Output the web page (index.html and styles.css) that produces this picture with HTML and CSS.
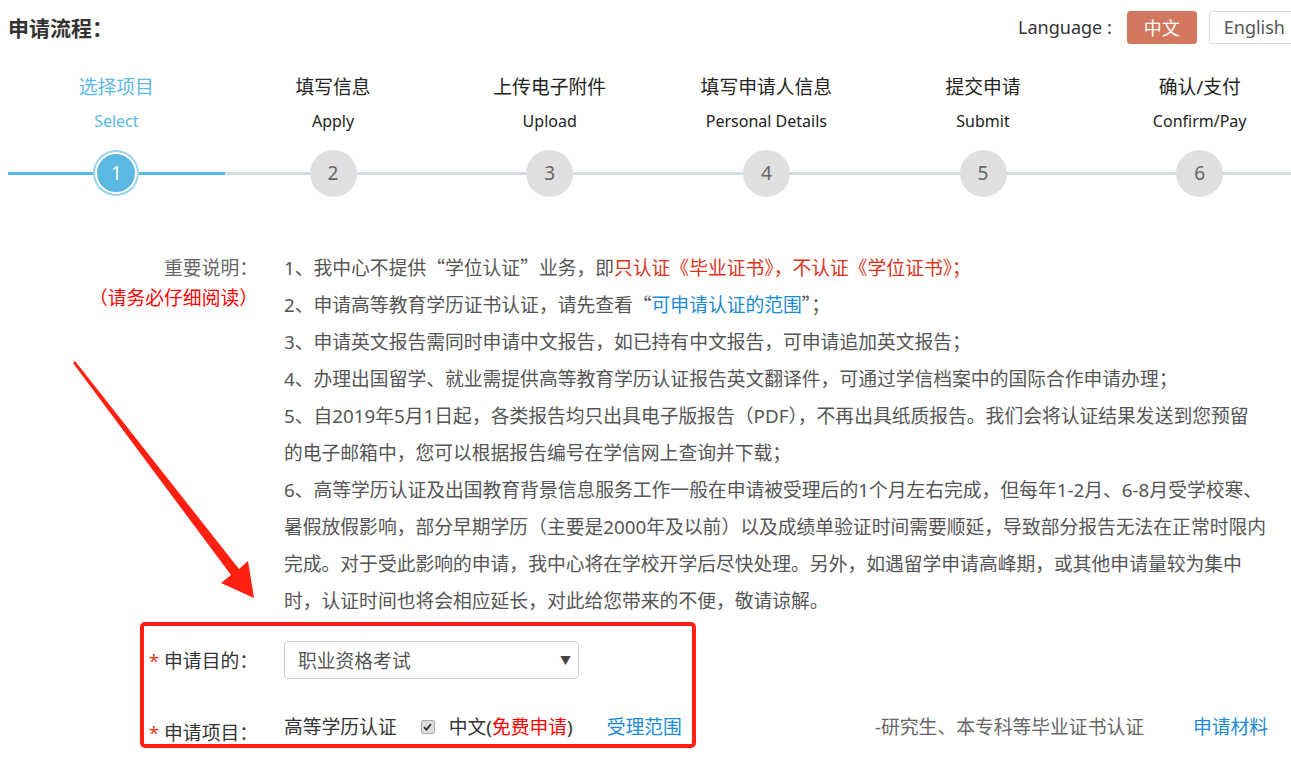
FILE: index.html
```html
<!DOCTYPE html>
<html lang="zh-CN">
<head>
    <meta charset="UTF-8">
    <meta name="viewport" content="width=device-width, initial-scale=1.0">
    <title>申请流程</title>
    <link rel="stylesheet" href="styles.css">
</head>
<body>
<div class="page">

    <!-- Header -->
    <div class="header">
        <h2 class="title">申请流程：</h2>
        <div class="lang">
            <span class="lang-label">Language :</span>
            <button class="lang-btn active">中文</button>
            <button class="lang-btn">English</button>
        </div>
    </div>

    <!-- Steps -->
    <div class="steps">
        <div class="step done">
            <div class="step-cn">选择项目</div>
            <div class="step-en">Select</div>
            <div class="step-track"><span class="step-num">1</span></div>
        </div>
        <div class="step">
            <div class="step-cn">填写信息</div>
            <div class="step-en">Apply</div>
            <div class="step-track"><span class="step-num">2</span></div>
        </div>
        <div class="step">
            <div class="step-cn">上传电子附件</div>
            <div class="step-en">Upload</div>
            <div class="step-track"><span class="step-num">3</span></div>
        </div>
        <div class="step">
            <div class="step-cn">填写申请人信息</div>
            <div class="step-en">Personal Details</div>
            <div class="step-track"><span class="step-num">4</span></div>
        </div>
        <div class="step">
            <div class="step-cn">提交申请</div>
            <div class="step-en">Submit</div>
            <div class="step-track"><span class="step-num">5</span></div>
        </div>
        <div class="step">
            <div class="step-cn">确认/支付</div>
            <div class="step-en">Confirm/Pay</div>
            <div class="step-track"><span class="step-num">6</span></div>
        </div>
    </div>

    <!-- Notes -->
    <div class="notes">
        <div class="notes-label">
            <div>重要说明：</div>
            <div class="red">（请务必仔细阅读）</div>
        </div>
        <div class="notes-text">
            <p>1、我中心不提供<span class="cjk">“</span>学位认证<span class="cjk">”</span>业务，即<span class="warn">只认证《毕业证书》，不认证《学位证书》；</span></p>
            <p>2、申请高等教育学历证书认证，请先查看<span class="cjk">“</span><a class="link" href="#">可申请认证的范围</a><span class="cjk">”</span>；</p>
            <p>3、申请英文报告需同时申请中文报告，如已持有中文报告，可申请追加英文报告；</p>
            <p>4、办理出国留学、就业需提供高等教育学历认证报告英文翻译件，可通过学信档案中的国际合作申请办理；</p>
            <p>5、自2019年5月1日起，各类报告均只出具电子版报告（PDF），不再出具纸质报告。我们会将认证结果发送到您预留<br>的电子邮箱中，您可以根据报告编号在学信网上查询并下载；</p>
            <p>6、高等学历认证及出国教育背景信息服务工作一般在申请被受理后的1个月左右完成，但每年1-2月、6-8月受学校寒、<br>暑假放假影响，部分早期学历（主要是2000年及以前）以及成绩单验证时间需要顺延，导致部分报告无法在正常时限内<br>完成。对于受此影响的申请，我中心将在学校开学后尽快处理。另外，如遇留学申请高峰期，或其他申请量较为集中<br>时，认证时间也将会相应延长，对此给您带来的不便，敬请谅解。</p>
        </div>
    </div>

    <!-- Form -->
    <div class="form">
        <div class="form-row">
            <div class="form-label"><span class="star">*</span> 申请目的：</div>
            <div class="select">
                <span>职业资格考试</span>
                <span class="select-arrow">&#9660;</span>
            </div>
        </div>
        <div class="form-row items">
            <div class="form-label low"><span class="star">*</span> 申请项目：</div>
            <div class="item-main">
                <span>高等学历认证</span>
                <span class="check">
                    <svg width="9" height="8" viewBox="0 0 9 8"><path d="M1 4.2 L3.4 6.6 L8 1.2" fill="none" stroke="#333" stroke-width="1.8"/></svg>
                </span>
                <span>中文(<span class="red">免费申请</span>)</span>
                <a class="link scope" href="#">受理范围</a>
            </div>
            <span class="item-desc">-研究生、本专科等毕业证书认证</span>
            <a class="link material" href="#">申请材料</a>
        </div>

        <!-- annotation box -->
        <div class="mark-box"></div>
    </div>

    <!-- annotation arrow -->
    <svg class="mark-arrow" width="300" height="620" viewBox="0 0 300 620">
        <polygon points="65,363 223,575 213,583 246,598 240,561 231,569 67,361" fill="#ff2012"/>
    </svg>
</div>
</body>
</html>
```

FILE: styles.css
```css
body {
    margin: 0 0 0 8px;
    overflow: hidden;
    background: #fff;
    font-family: "Noto Sans", "Noto Sans CJK SC", sans-serif;
    color: #555;
}

.page {
    position: relative;
    width: 1300px;
}

/* Header */
.header {
    display: flex;
    justify-content: space-between;
    align-items: center;
    height: 54px;
}

.title {
    margin: 0;
    font-size: 21px;
    font-weight: bold;
    color: #333;
}

.lang {
    display: flex;
    align-items: center;
    padding-right: 8px;
}

.lang-label {
    font-size: 18px;
    color: #333;
    margin-right: 3px;
}

.lang-btn {
    font-family: inherit;
    font-size: 18px;
    height: 33px;
    padding: 0 14px;
    margin-left: 12px;
    border: 1px solid #ddd;
    border-radius: 3px;
    background: #fff;
    color: #555;
}

.lang-btn.active {
    background: #d4775f;
    border-color: #d4775f;
    color: #fff;
    padding: 0 16px;
}

/* Steps */
.steps {
    display: flex;
    margin-top: 20px;
}

.step {
    flex: 1;
    text-align: center;
    color: #222;
}

.step-cn {
    font-size: 18.8px;
    line-height: 26px;
}

.step-en {
    font-size: 16px;
    line-height: 22px;
    margin-top: 10px;
}

.step.done .step-cn,
.step.done .step-en {
    color: #5bb8e3;
}

.step-track {
    position: relative;
    height: 48px;
    margin-top: 17px;
    display: flex;
    justify-content: center;
    align-items: center;
}

.step-track::before {
    content: "";
    position: absolute;
    left: 0;
    right: 0;
    top: 23px;
    height: 3px;
    background: #d3dae8;
}

.step.done .step-track::before {
    background: #5bb8e3;
}

.step-num {
    position: relative;
    width: 47px;
    height: 47px;
    border-radius: 50%;
    background: #e0e0e0;
    color: #666;
    font-size: 19px;
    line-height: 47px;
}

.step.done .step-num {
    width: 38px;
    height: 38px;
    line-height: 38px;
    background: #5bb8e3;
    border: 2px solid #fff;
    box-shadow: 0 0 0 2px #9ad4f0;
    color: #fff;
}

/* Notes */
.notes {
    display: flex;
    margin-top: 53px;
    font-size: 18.8px;
}

.notes-label {
    width: 250px;
    flex-shrink: 0;
    text-align: right;
    line-height: 30px;
    padding-top: 3px;
    color: #666;
}

.notes-text {
    margin-left: 26px;
    line-height: 37px;
}

.notes-text p {
    margin: 0;
    height: auto;
    white-space: nowrap;
}

.cjk {
    font-family: "Noto Sans CJK SC", sans-serif;
    line-height: 1;
}

.red {
    color: #ff0000;
}

.warn {
    color: #d8341a;
}

.link {
    color: #1a8ad4;
    text-decoration: none;
}

/* Form */
.form {
    position: relative;
    margin-top: 21px;
    font-size: 18.8px;
}

.form-row {
    display: flex;
    align-items: center;
}

.form-label {
    width: 250px;
    flex-shrink: 0;
    text-align: right;
    color: #333;
}

.star {
    color: #e03a1a;
}

.select {
    display: flex;
    justify-content: space-between;
    align-items: center;
    width: 273px;
    height: 36px;
    margin-left: 26px;
    padding: 0 7px 0 13px;
    border: 1px solid #ccc;
    border-radius: 4px;
    color: #555;
}

.select-arrow {
    font-size: 11px;
    color: #444;
}

.items {
    margin-top: 33px;
    align-items: flex-start;
    line-height: 30px;
}

.form-label.low {
    padding-top: 6px;
}

.item-main {
    display: flex;
    align-items: center;
    width: 591px;
    margin-left: 26px;
    color: #333;
}

.check {
    display: inline-flex;
    justify-content: center;
    align-items: center;
    width: 12px;
    height: 12px;
    margin: 0 14px 0 24px;
    border: 1px solid #aaa;
    border-radius: 2px;
    background: #ddd;
}

.scope {
    margin-left: 34px;
}

.item-desc {
    color: #666;
}

.material {
    margin-left: 49px;
}

/* Annotations */
.mark-box {
    position: absolute;
    left: 132px;
    top: -19px;
    width: 548px;
    height: 118px;
    border: 4px solid #ff2012;
    border-radius: 5px;
}

.mark-arrow {
    position: absolute;
    left: 0;
    top: 0;
}
```
